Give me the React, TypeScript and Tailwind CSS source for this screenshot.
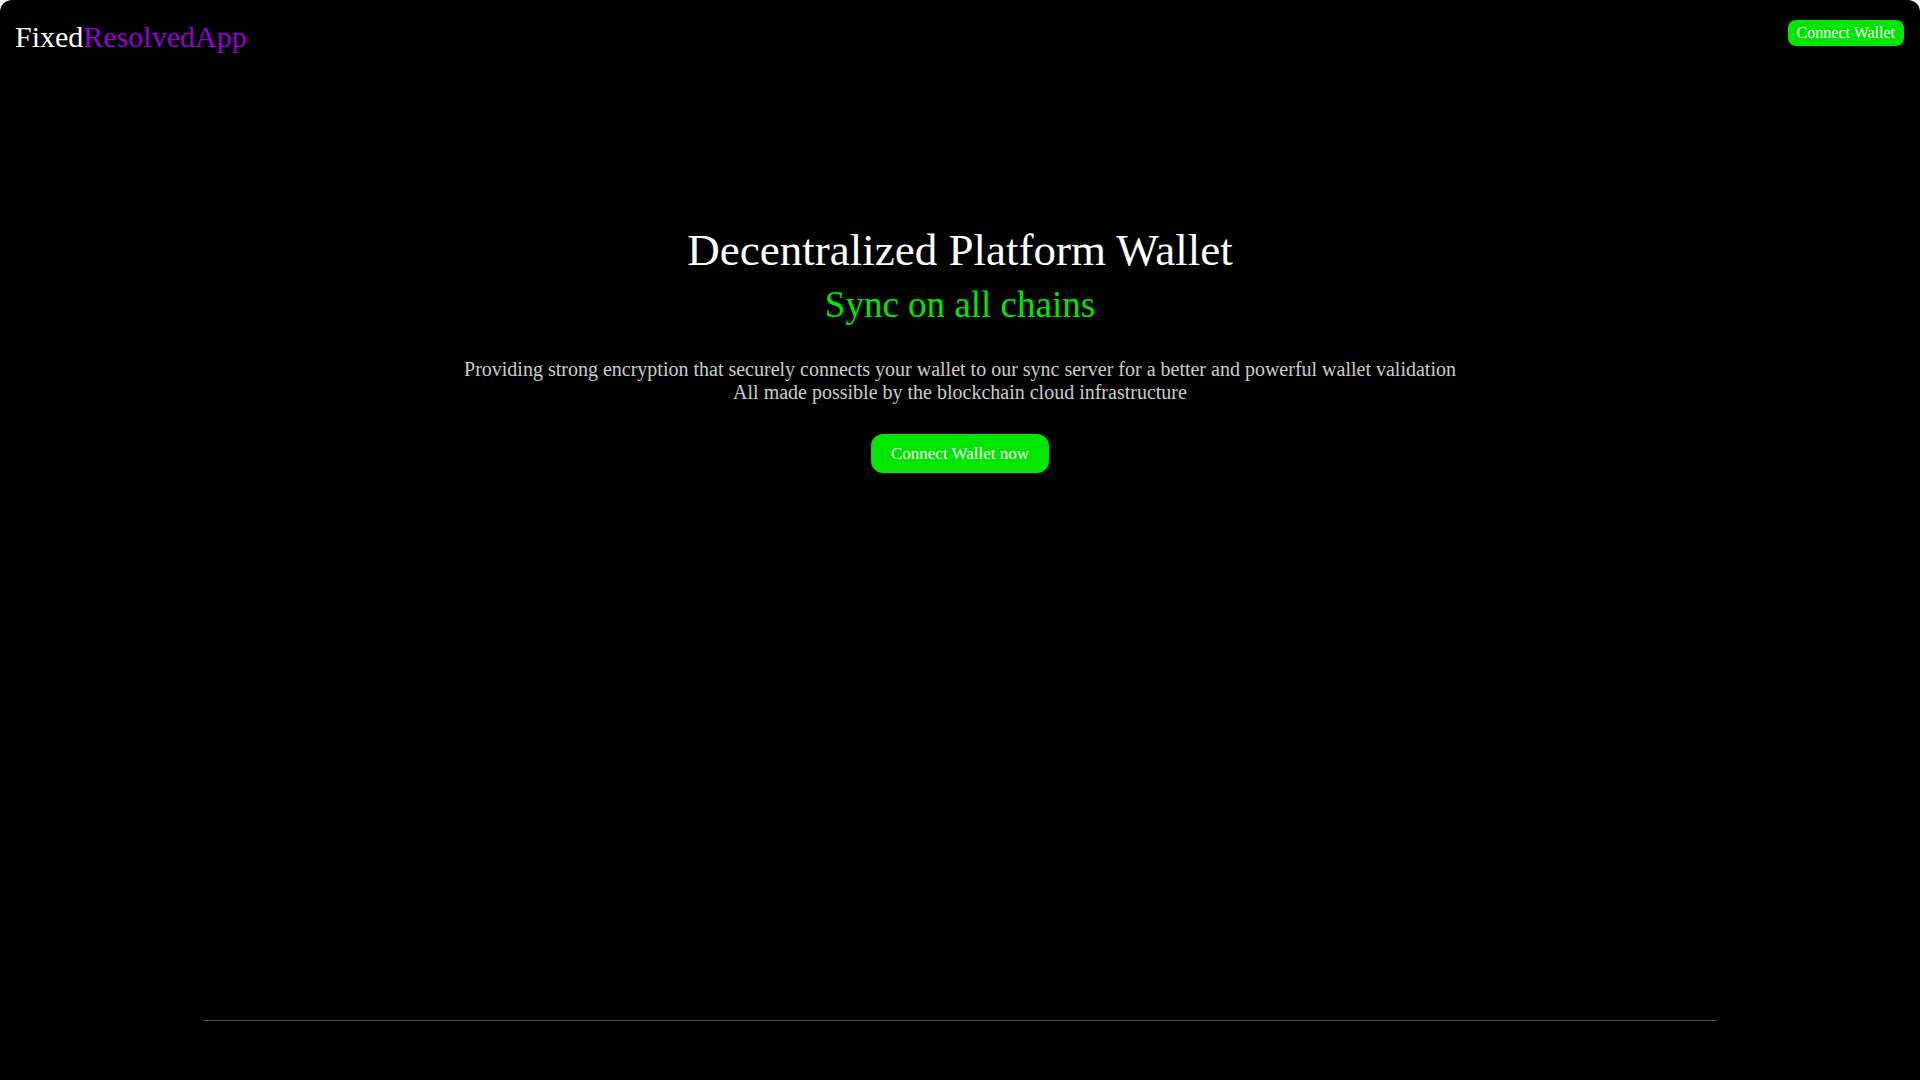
export default function App() {
  return (
    <div className="bg-white min-h-screen font-['Liberation_Serif','Times_New_Roman',serif]">
      <div className="h-[1080px] bg-black rounded-t-xl flex flex-col">
        {/* Header */}
        <header className="flex justify-between items-start pl-[15px] pr-4 pt-[20px]">
          <a className="text-[30px] leading-[1.15] text-white">
            Fixed<span className="text-[#9400d3]">ResolvedApp</span>
          </a>
          <button className="h-[26px] px-[9px] rounded-lg bg-[#00e600] text-white text-[16px] leading-[1.15]">
            Connect Wallet
          </button>
        </header>

        {/* Hero */}
        <main className="flex flex-col items-center text-center pt-[170px]">
          <h1 className="text-[45px] leading-[1.15] text-white">Decentralized Platform Wallet</h1>
          <h2 className="mt-[8px] text-[37px] leading-[1.15] text-[#00e600]">Sync on all chains</h2>
          <p className="mt-[31px] text-[20px] leading-[23px] text-[#cccccc]">
            Providing strong encryption that securely connects your wallet to our sync server for a better and powerful wallet validation
            <br />
            All made possible by the blockchain cloud infrastructure
          </p>
          <button className="mt-[30px] h-[39px] px-[20px] rounded-xl bg-[#00e600] text-white text-[17px] leading-[1.15]">
            Connect Wallet now
          </button>
        </main>

        {/* Footer */}
        <footer className="mt-auto mb-[59px] flex justify-center">
          <div className="w-[1514px] h-px bg-[#4d4d4d]" />
        </footer>
      </div>
    </div>
  );
}
